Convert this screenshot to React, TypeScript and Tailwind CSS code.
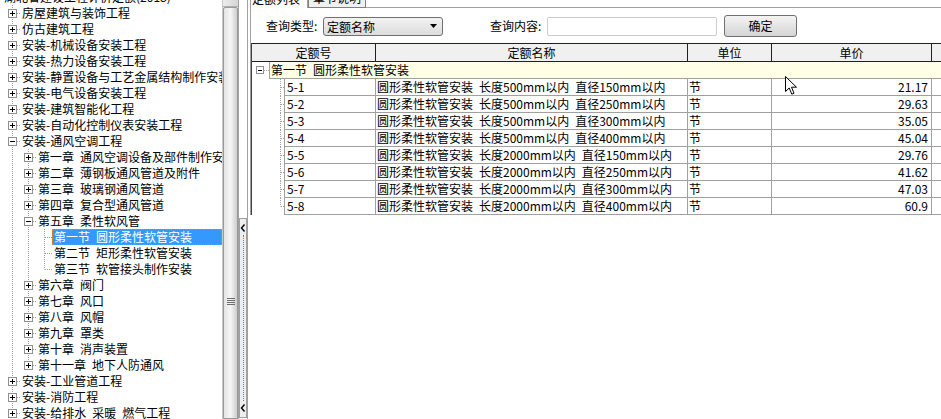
import React from "react";

type Kind = "plus" | "minus" | "leaf";

type TreeItem = {
  label: string;
  level: number;
  kind: Kind;
  last?: boolean;
  selected?: boolean;
};

const treeItems: TreeItem[] = [
  { label: "房屋建筑与装饰工程", level: 0, kind: "plus" },
  { label: "仿古建筑工程", level: 0, kind: "plus" },
  { label: "安装-机械设备安装工程", level: 0, kind: "plus" },
  { label: "安装-热力设备安装工程", level: 0, kind: "plus" },
  { label: "安装-静置设备与工艺金属结构制作安装工程", level: 0, kind: "plus" },
  { label: "安装-电气设备安装工程", level: 0, kind: "plus" },
  { label: "安装-建筑智能化工程", level: 0, kind: "plus" },
  { label: "安装-自动化控制仪表安装工程", level: 0, kind: "plus" },
  { label: "安装-通风空调工程", level: 0, kind: "minus" },
  { label: "第一章 通风空调设备及部件制作安装", level: 1, kind: "plus" },
  { label: "第二章 薄钢板通风管道及附件", level: 1, kind: "plus" },
  { label: "第三章 玻璃钢通风管道", level: 1, kind: "plus" },
  { label: "第四章 复合型通风管道", level: 1, kind: "plus" },
  { label: "第五章 柔性软风管", level: 1, kind: "minus" },
  { label: "第一节 圆形柔性软管安装", level: 2, kind: "leaf", selected: true },
  { label: "第二节 矩形柔性软管安装", level: 2, kind: "leaf" },
  { label: "第三节 软管接头制作安装", level: 2, kind: "leaf", last: true },
  { label: "第六章 阀门", level: 1, kind: "plus" },
  { label: "第七章 风口", level: 1, kind: "plus" },
  { label: "第八章 风帽", level: 1, kind: "plus" },
  { label: "第九章 罩类", level: 1, kind: "plus" },
  { label: "第十章 消声装置", level: 1, kind: "plus" },
  { label: "第十一章 地下人防通风", level: 1, kind: "plus", last: true },
  { label: "安装-工业管道工程", level: 0, kind: "plus" },
  { label: "安装-消防工程", level: 0, kind: "plus" },
  { label: "安装-给排水 采暖 燃气工程", level: 0, kind: "plus" },
  { label: "安装-刷油、防腐蚀、绝热工程", level: 0, kind: "plus" },
];

const rows = [
  { code: "5-1", name: "圆形柔性软管安装 长度500mm以内 直径150mm以内", unit: "节", price: "21.17" },
  { code: "5-2", name: "圆形柔性软管安装 长度500mm以内 直径250mm以内", unit: "节", price: "29.63" },
  { code: "5-3", name: "圆形柔性软管安装 长度500mm以内 直径300mm以内", unit: "节", price: "35.05" },
  { code: "5-4", name: "圆形柔性软管安装 长度500mm以内 直径400mm以内", unit: "节", price: "45.04" },
  { code: "5-5", name: "圆形柔性软管安装 长度2000mm以内 直径150mm以内", unit: "节", price: "29.76" },
  { code: "5-6", name: "圆形柔性软管安装 长度2000mm以内 直径250mm以内", unit: "节", price: "41.62" },
  { code: "5-7", name: "圆形柔性软管安装 长度2000mm以内 直径300mm以内", unit: "节", price: "47.03" },
  { code: "5-8", name: "圆形柔性软管安装 长度2000mm以内 直径400mm以内", unit: "节", price: "60.9" },
];

const sp = (s: string) => s.replace(/ /g, "\u2002");

function Guide() {
  return (
    <svg width="16" height="16" className="shrink-0">
      <line x1="8.5" y1="0" x2="8.5" y2="16" stroke="#a0a0a0" strokeDasharray="1 1" />
    </svg>
  );
}

function NodeCell({ kind, last }: { kind: Kind; last?: boolean }) {
  return (
    <svg width="16" height="16" className="shrink-0">
      <line x1="8.5" y1="0" x2="8.5" y2={last ? 8.5 : 16} stroke="#a0a0a0" strokeDasharray="1 1" />
      <line x1="9" y1="8.5" x2="16" y2="8.5" stroke="#a0a0a0" strokeDasharray="1 1" />
      {kind !== "leaf" && (
        <>
          <rect x="4.5" y="4.5" width="8" height="8" fill="#fff" stroke="#8e8f8f" />
          <line x1="6" y1="8.5" x2="11" y2="8.5" stroke="#000" />
          {kind === "plus" && <line x1="8.5" y1="6" x2="8.5" y2="11" stroke="#000" />}
        </>
      )}
    </svg>
  );
}

function Tree() {
  return (
    <div className="w-[222px] shrink-0 overflow-hidden">
      <div className="-mt-[11px] pl-[4px]">
        <div className="h-[16px] leading-[16px] whitespace-nowrap">湖北省建设工程计价定额(2018)</div>
        {treeItems.map((it, i) => (
          <div key={i} className="flex h-[16px] items-stretch whitespace-nowrap">
            {Array.from({ length: it.level }).map((_, g) => (
              <Guide key={g} />
            ))}
            <NodeCell kind={it.kind} last={it.last} />
            {it.selected ? (
              <span className="flex-1 border border-dotted border-[#d08a3a] bg-[#3399ff] pl-[1px] leading-[14px] text-white">
                {sp(it.label)}
              </span>
            ) : (
              <span className="pl-[2px] leading-[16px]">{sp(it.label)}</span>
            )}
          </div>
        ))}
      </div>
    </div>
  );
}

function ScrollBar() {
  return (
    <div className="flex w-[16px] shrink-0 flex-col border-l border-[#c8c8c8] bg-[#f0f0f0]">
      <div className="h-[7px] border-b border-[#b0b0b0] bg-linear-to-r from-[#ececec] to-[#d6d6d6]" />
      <div className="flex-1 rounded-t-[2px] border border-[#9a9a9a] bg-linear-to-r from-[#e4e4e4] via-[#f6f6f6] to-[#cdcdcd] pt-[290px]">
        <div className="mx-auto flex w-[8px] flex-col gap-[1px]">
          <div className="h-[1px] bg-[#6e6e6e]" />
          <div className="h-[1px] bg-[#6e6e6e]" />
          <div className="h-[1px] bg-[#6e6e6e]" />
          <div className="h-[1px] bg-[#6e6e6e]" />
        </div>
      </div>
    </div>
  );
}

function Chevron() {
  return (
    <svg width="6" height="8">
      <path d="M4.5 0.5 L1.5 4 L4.5 7.5" fill="none" stroke="#000" strokeWidth="1.4" />
    </svg>
  );
}

function Splitter() {
  return (
    <div className="flex w-[10px] shrink-0 flex-col border-x border-[#a0a0a0] bg-white">
      <div className="h-[218px]" />
      <div className="mb-[1px] flex flex-1 flex-col items-center border border-[#a0a0a0] bg-[#eeeeee] py-[5px]">
        <Chevron />
        <div className="my-[3px] flex-1 border-l border-dotted border-[#3b8de0]" />
        <Chevron />
      </div>
    </div>
  );
}

function QueryBar() {
  return (
    <div className="mt-[7px] flex h-[22px] items-center pl-[15px]">
      <span className="w-[57px]">查询类型:</span>
      <div className="flex h-[19px] w-[120px] items-center justify-between rounded-[3px] border border-[#707070] bg-linear-to-b from-[#f3f3f3] to-[#dcdcdc] pl-[3px] pr-[5px]">
        <span className="leading-[15px]">定额名称</span>
        <svg width="7" height="4">
          <path d="M0 0 H7 L3.5 4 Z" fill="#000" />
        </svg>
      </div>
      <span className="ml-[47px] w-[57px]">查询内容:</span>
      <div className="h-[19px] w-[170px] rounded-[2px] border border-[#cccccc] bg-white" />
      <button className="ml-[7px] h-[22px] w-[73px] rounded-[3px] border border-[#707070] bg-linear-to-b from-[#f4f4f4] to-[#d4d4d4] leading-[20px]">
        确定
      </button>
    </div>
  );
}

function QuotaTable() {
  return (
    <div className="mt-[6px] border-l border-[#404040]">
      <div className="flex h-[19px] border-y border-[#202020] bg-[#f0f0f0] leading-[17px]">
        <div className="w-[124px] shrink-0 border-r border-[#202020] text-center">定额号</div>
        <div className="w-[312px] shrink-0 border-r border-[#202020] text-center">定额名称</div>
        <div className="w-[84px] shrink-0 border-r border-[#202020] text-center">单位</div>
        <div className="w-[160px] shrink-0 border-r border-[#202020] text-center">单价</div>
        <div className="flex-1" />
      </div>

      <div className="flex h-[17px]">
        <svg width="17" height="17" className="shrink-0">
          <line x1="12" y1="8.5" x2="17" y2="8.5" stroke="#a0a0a0" strokeDasharray="1 1" />
          <rect x="4.5" y="4.5" width="7" height="7" fill="#fff" stroke="#8e8f8f" />
          <line x1="6" y1="8.5" x2="10" y2="8.5" stroke="#000" />
        </svg>
        <div className="flex-1 border-b border-l border-[#a0a0a0] bg-[#ffffe6] pl-[1px] leading-[16px] whitespace-nowrap">
          {sp("第一节 圆形柔性软管安装")}
        </div>
      </div>

      {rows.map((r, i) => (
        <div key={r.code} className="flex h-[17px] leading-[16px] whitespace-nowrap">
          <svg width="32" height="17" className="shrink-0">
            <line
              x1="28.5"
              y1="0"
              x2="28.5"
              y2={i === rows.length - 1 ? 8.5 : 17}
              stroke="#a0a0a0"
              strokeDasharray="1 1"
            />
            <line x1="29" y1="8.5" x2="32" y2="8.5" stroke="#a0a0a0" strokeDasharray="1 1" />
          </svg>
          <div className="w-[92px] shrink-0 border-x border-b border-[#a0a0a0] pl-[2px]">{r.code}</div>
          <div className="w-[312px] shrink-0 overflow-hidden border-r border-b border-[#a0a0a0] pl-[1px]">
            {sp(r.name)}
          </div>
          <div className="w-[84px] shrink-0 border-r border-b border-[#a0a0a0] pl-[1px]">{r.unit}</div>
          <div className="w-[160px] shrink-0 border-r border-b border-[#a0a0a0] pr-[3px] text-right">
            {r.price}
          </div>
          <div className="flex-1 border-b border-[#a0a0a0]" />
        </div>
      ))}
    </div>
  );
}

function RightPanel() {
  return (
    <div className="flex min-w-0 flex-1 flex-col pl-[2px]">
      <div className="flex h-[215px] flex-col overflow-hidden border-l border-[#a0a0a0]">
        <div className="flex h-[8px] shrink-0">
          <div className="h-[8px] w-[57px] overflow-hidden border-r border-[#a0a0a0] pl-[1px]">
            <div className="-mt-[9px] leading-[16px]">定额列表</div>
          </div>
          <div className="h-[8px] w-[58px] overflow-hidden border-x border-b border-[#808080] bg-[#f0f0f0] pl-[4px]">
            <div className="-mt-[10px] leading-[16px]">章节说明</div>
          </div>
          <div className="flex-1 border-b border-[#a0a0a0]" />
        </div>
        <QueryBar />
        <QuotaTable />
      </div>
      <div className="flex-1" />
    </div>
  );
}

export default function App() {
  return (
    <div className="relative flex h-[419px] w-[941px] overflow-hidden bg-white font-['Noto_Sans_CJK_SC',sans-serif] text-[12px] text-black">
      <Tree />
      <ScrollBar />
      <Splitter />
      <RightPanel />
      <svg width="13" height="20" className="pointer-events-none absolute left-[785px] top-[76px]">
        <path
          d="M0.5 0.5 L0.5 15.5 L4.2 12 L6.8 18.2 L9 17.2 L6.5 11.2 L11.5 11.2 Z"
          fill="#fff"
          stroke="#000"
          strokeLinejoin="round"
        />
      </svg>
    </div>
  );
}
